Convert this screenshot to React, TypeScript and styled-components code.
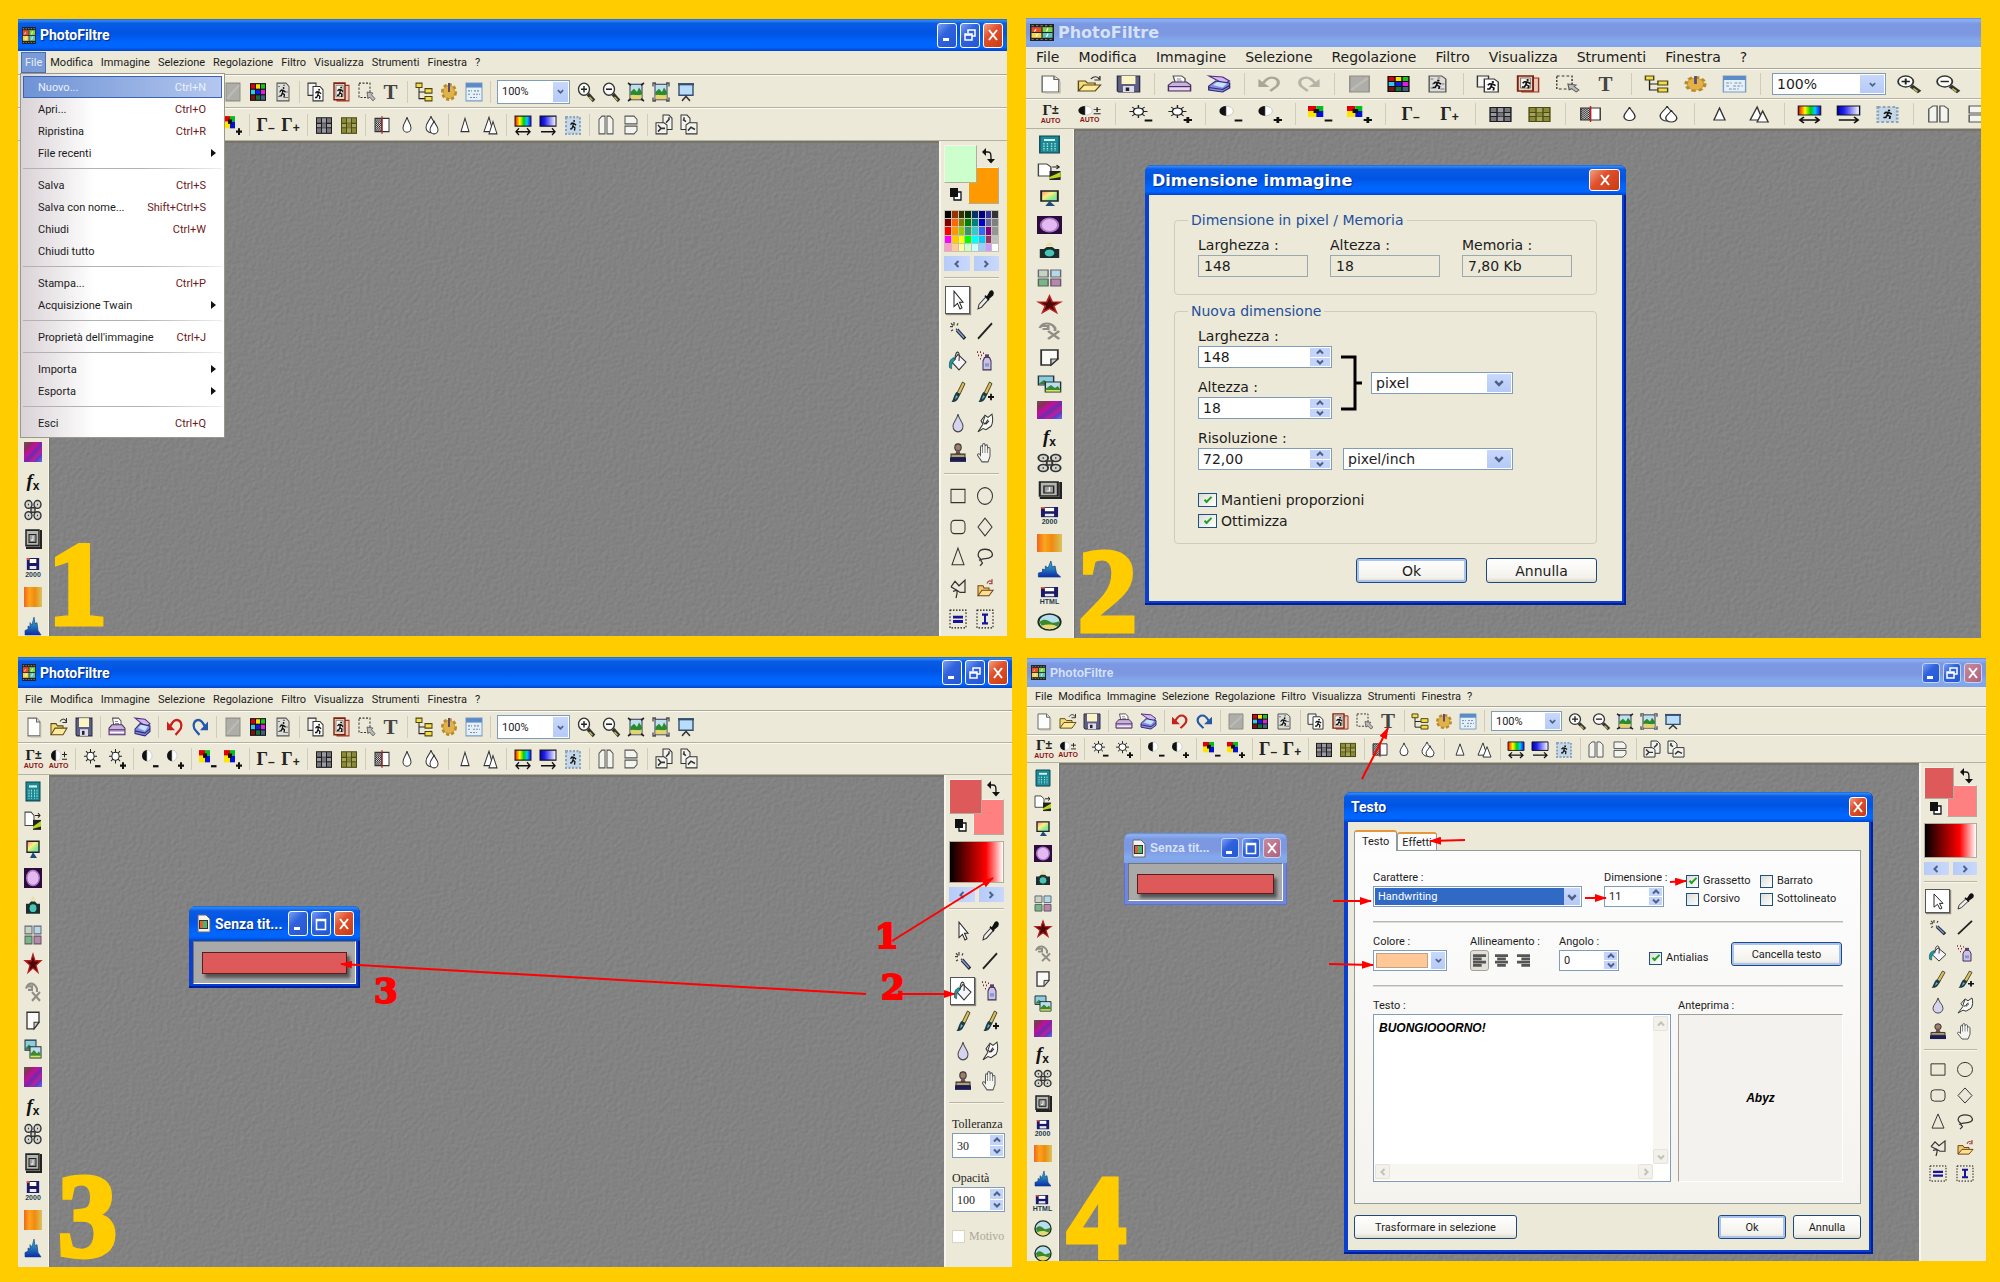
import React, { ReactNode, useState } from 'react';
import styled, { createGlobalStyle, css, ThemeProvider } from 'styled-components';

/* ---------- per-window metrics ---------- */

interface Metrics {
  font: string;
  textSize: number;
  menuSize: number;
  menuGap: number;
  menuLeft: number;
  titleFont: string;
  titleSize: number;
  titleHeight: number;
  menuHeight: number;
  barHeight: number;
  barLeft: number;
  slot: number;
  rule: number;
  iconW: number;
  iconH: number;
  zoomW: number;
  zoomH: number;
  zoomGap: number;
  railW: number;
  railTop: number;
  railRows: string;
  railCount: number;
  boxW: number;
  boxGap: number;
  inner: number;
  swatchRows: string;
  swatchCols: string;
  paletteH: number;
  arrowH: number;
  toolRows: string;
  toolH: number;
  captionW: number;
  captionH: number;
  logoW: number;
  logoH: number;
}

const narrow = 'Roboto, "Liberation Sans", Arial, sans-serif';
const wide = '"DejaVu Sans", Verdana, sans-serif';

const tall: Metrics = {
  font: narrow, textSize: 11, menuSize: 11, menuGap: 8, menuLeft: 7,
  titleFont: narrow, titleSize: 14, titleHeight: 32, menuHeight: 24, barHeight: 33,
  barLeft: 3, slot: 25, rule: 8, iconW: 18, iconH: 20, zoomW: 73, zoomH: 24, zoomGap: 3,
  railW: 31, railTop: 6, railRows: '29px', railCount: 17, boxW: 68, boxGap: 5, inner: 55,
  swatchRows: '22px 16px 21px', swatchCols: '24px 9px 22px', paletteH: 42, arrowH: 15,
  toolRows: '31px 31px 30px', toolH: 28, captionW: 20, captionH: 25, logoW: 14, logoH: 17,
};

const tallLow: Metrics = {
  ...tall, titleHeight: 31, menuHeight: 23, barHeight: 32, railTop: 3, railRows: '28px 29px',
  boxGap: 6, swatchRows: '20px 15px 21px', toolRows: '30px',
};

const broad: Metrics = {
  ...tall, font: wide, textSize: 14, menuSize: 14, menuGap: 19, menuLeft: 10,
  titleFont: wide, titleSize: 16, titleHeight: 29, menuHeight: 22, barHeight: 30,
  barLeft: 5, slot: 39, rule: 12, iconW: 25, iconH: 18, zoomW: 114, zoomH: 22, zoomGap: 6,
  railW: 48, railTop: 3, railRows: '26px 27px', railCount: 19, logoW: 24, logoH: 17,
};

const compact: Metrics = {
  ...tall, menuGap: 6, menuLeft: 8,
  titleFont: '"Liberation Sans", Arial, sans-serif',
  titleSize: 12, titleHeight: 29, menuHeight: 20, barHeight: 28, barLeft: 5, slot: 24, rule: 8,
  iconH: 17, zoomW: 71, zoomH: 20, railW: 32, railTop: 3, railRows: '25px', railCount: 20,
  boxW: 67, inner: 53, swatchRows: '18px 14px 18px', swatchCols: '23px 7px 23px', paletteH: 35,
  arrowH: 13, toolRows: '26px', toolH: 24, captionW: 18, captionH: 20, logoW: 15, logoH: 15,
};

type T = { theme: any };
const m = (key: keyof Metrics) => ({ theme }: T) => `${theme[key]}px`;

/* ---------- base ---------- */

const GlobalStyle = createGlobalStyle`
  *, *::before, *::after { box-sizing: border-box; }
  body { margin: 0; background: #ffcc00; }
  button, input, select, textarea { font: inherit; color: inherit; margin: 0; }
`;

const Page = styled.main`
  display: grid;
  grid-template-columns: 994fr 960fr;
  grid-template-rows: minmax(0, 620fr) minmax(0, 610fr);
  gap: 19px 14px;
  height: 100vh;
  padding: 18px 14px 15px 18px;
  background: #ffcc00;
`;

const Window = styled.section<{ $margin?: string }>`
  position: relative;
  display: flex;
  flex-direction: column;
  min-width: 0;
  overflow: hidden;
  margin: ${p => p.$margin || '0'};
  background: #ece9d8;
  color: #1c1c1c;
  font-family: ${({ theme }: T) => theme.font};
  font-size: ${m('textSize')};
`;

const blue = 'linear-gradient(#1a66d8 0, #2f86f4 5%, #0a5ce4 14%, #0054e3 45%, #0064fb 70%, #0066ff 88%, #0044c8 100%)';
const faded = 'linear-gradient(#5b87e0 0, #8fb2f2 6%, #7b98e2 20%, #7d97e0 55%, #84aaec 80%, #7fa3ea 100%)';

const TitleBar = styled.header<{ $idle?: boolean }>`
  display: flex;
  flex: none;
  align-items: center;
  gap: 4px;
  height: ${m('titleHeight')};
  padding: 0 4px;
  background: ${p => (p.$idle ? faded : blue)};
  color: ${p => (p.$idle ? '#d6e2fa' : '#fff')};
`;

const Title = styled.h2<{ $idle?: boolean }>`
  flex: 1;
  min-width: 0;
  margin: 0;
  font: bold ${m('titleSize')} ${({ theme }: T) => theme.titleFont};
  white-space: nowrap;
  text-shadow: ${p => (p.$idle ? 'none' : '1px 1px 1px #0a2a80')};
`;

const Caption = styled.div`
  display: flex;
  flex: none;
  gap: 3px;
`;

const CaptionButton = styled.button<{ $close?: boolean; $idle?: boolean }>`
  display: grid;
  place-items: center;
  width: ${m('captionW')};
  height: ${m('captionH')};
  padding: 0;
  border: 1px solid ${p => (p.$idle ? '#c3d2f5' : '#fff')};
  border-radius: 3px;
  background: ${p => p.$close
    ? (p.$idle ? 'linear-gradient(135deg, #c98a9c, #b0607c)' : 'linear-gradient(135deg, #f0a080, #e0502c 40%, #c83a14)')
    : 'linear-gradient(135deg, #7aa0f4, #2f62dc 40%, #2458d4)'};
`;

const MenuBar = styled.nav`
  display: flex;
  flex: none;
  align-items: center;
  gap: ${m('menuGap')};
  height: ${m('menuHeight')};
  padding-left: ${m('menuLeft')};
  border-bottom: 1px solid #a9a796;
  font-size: ${m('menuSize')};
`;

const MenuButton = styled.button<{ $open?: boolean }>`
  padding: 0;
  border: 0;
  background: none;
  line-height: 19px;
  white-space: nowrap;
  ${p => p.$open && css`
    margin: 0 -4px;
    padding: 0 3px;
    border: 1px solid #4a6ea9;
    background: #7a9bd8;
    color: #e6eefc;
  `}
`;

const Toolbar = styled.div`
  display: flex;
  flex: none;
  align-items: center;
  height: ${m('barHeight')};
  padding-left: ${m('barLeft')};
  overflow: hidden;
  border-top: 1px solid #fbfaf4;
  border-bottom: 1px solid #b4b19e;
`;

const Rule = styled.i`
  flex: none;
  width: ${m('rule')};
  height: 22px;
  background: linear-gradient(#cfccba, #cfccba) center / 1px 100% no-repeat;
`;

const Slot = styled.button`
  display: grid;
  flex: none;
  place-items: center;
  width: ${m('slot')};
  height: 100%;
  padding: 0;
  border: 0;
  background: none;
`;

const Body = styled.div`
  display: flex;
  flex: 1;
  min-height: 0;
`;

const Rail = styled.div`
  display: grid;
  flex: none;
  grid-auto-rows: ${({ theme }: T) => theme.railRows};
  align-content: start;
  width: ${m('railW')};
  padding-top: ${m('railTop')};
  overflow: hidden;
  border-right: 1px solid #f8f6ec;
`;

const RailButton = styled.button`
  display: grid;
  place-items: center;
  padding: 0;
  border: 0;
  background: none;
`;

const Canvas = styled.div`
  position: relative;
  flex: 1;
  min-width: 0;
  background: #828282;
  box-shadow: inset 1px 2px 0 #77756b;
`;

const Grain = styled.svg`
  position: absolute;
  inset: 2px 0 0 1px;
  width: calc(100% - 1px);
  height: calc(100% - 2px);
`;

const ToolBox = styled.aside`
  flex: none;
  width: ${m('boxW')};
  padding: 4px 0 0 3px;
  border-left: 2px solid #f8f6ec;
`;

const Swatches = styled.div`
  display: grid;
  grid-template-columns: ${({ theme }: T) => theme.swatchCols};
  grid-template-rows: ${({ theme }: T) => theme.swatchRows};
  place-items: center;
  width: ${m('inner')};
`;

const Swatch = styled.button<{ $color: string; $back?: boolean }>`
  z-index: ${p => (p.$back ? 0 : 1)};
  grid-area: ${p => (p.$back ? '2 / 2 / 4 / 4' : '1 / 1 / 3 / 3')};
  place-self: stretch;
  padding: 0;
  border: 1px solid;
  border-color: #f6f4ea #b0ad9a #b0ad9a #f6f4ea;
  background: ${p => p.$color};
`;

const SwatchTool = styled.button<{ $low?: boolean }>`
  grid-area: ${p => (p.$low ? '3 / 1' : '1 / 3')};
  display: grid;
  padding: 0;
  border: 0;
  background: none;
`;

const Palette = styled.div`
  display: grid;
  grid-template-columns: repeat(8, 1fr);
  grid-template-rows: repeat(5, 1fr);
  gap: 1px;
  width: ${m('inner')};
  height: ${m('paletteH')};
  margin-top: 6px;
  padding: 1px;
  background: #c5c2b4;
`;

const Cell = styled.button<{ $color: string }>`
  min-width: 0;
  padding: 0;
  border: 0;
  background: ${p => p.$color};
`;

const Spectrum = styled.div`
  width: ${m('inner')};
  height: ${m('paletteH')};
  margin-top: 6px;
  border: 1px solid #b0ad9a;
  background: linear-gradient(90deg, #000, #f00 68%, #fff);
`;

const Pager = styled.div`
  display: grid;
  grid-template-columns: 1fr 1fr;
  gap: 4px;
  width: ${m('inner')};
  margin: 4px 0 6px;
`;

const PagerButton = styled.button`
  display: grid;
  place-items: center;
  height: ${m('arrowH')};
  padding: 0;
  border: 0;
  background: linear-gradient(90deg, #b6cbf8, #c9d8fb);
`;

const Divider = styled.hr`
  width: ${m('inner')};
  height: 2px;
  margin: ${m('boxGap')} 0;
  border: 0;
  border-top: 1px solid #b9b6a4;
  border-bottom: 1px solid #f8f6ec;
`;

const Tools = styled.div`
  display: grid;
  grid-template-columns: repeat(2, 27px);
  grid-auto-rows: ${({ theme }: T) => theme.toolRows};
  place-items: center;
`;

const ToolButton = styled.button<{ $on?: boolean }>`
  display: grid;
  place-items: center;
  width: 25px;
  height: ${m('toolH')};
  padding: 0;
  border: 1px solid ${p => (p.$on ? '#555' : 'transparent')};
  background: ${p => (p.$on ? '#fff' : 'none')};
  box-shadow: ${p => (p.$on ? '1px 1px 1px #8a887c' : 'none')};
`;

/* ---------- form parts ---------- */

const Field = styled.label`
  display: flex;
  flex-direction: column;
  white-space: nowrap;
`;

const boxed = css`
  border: 1px solid #7f9db9;
  background: #fff;
`;

const ReadOnly = styled.input`
  width: 110px;
  height: 22px;
  padding: 0 5px;
  border: 1px solid #9aa8b0;
  background: #ece9d8;
`;

const SpinShell = styled.span<{ $w: number; $h: number }>`
  display: flex;
  width: ${p => p.$w}px;
  height: ${p => p.$h}px;
  padding: 1px;
  ${boxed}
`;

const SpinInput = styled.input`
  flex: 1;
  min-width: 0;
  padding: 0 0 0 3px;
  border: 0;
  outline: 0;
  background: none;
`;

const SpinKeys = styled.span<{ $w: number }>`
  display: grid;
  grid-template-rows: 1fr 1fr;
  gap: 1px;
  width: ${p => p.$w}px;
`;

const SpinKey = styled.button`
  display: grid;
  place-items: center;
  min-height: 0;
  padding: 0;
  border: 0;
  background: #c3d3fa;
`;

const SelectShell = styled.span<{ $w: number; $h: number; $key: number }>`
  display: grid;
  flex: none;
  grid-template-columns: minmax(0, 1fr) ${p => p.$key}px;
  width: ${p => p.$w}px;
  height: ${p => p.$h}px;
  padding: 1px;
  ${boxed}
`;

const Select = styled.select<{ $mark?: boolean }>`
  grid-area: 1 / 1 / 2 / 3;
  width: 100%;
  min-width: 0;
  padding: 0 3px;
  border: 0;
  outline: 0;
  appearance: none;
  background: ${p => (p.$mark ? '#316ac5' : 'none')};
  color: ${p => (p.$mark ? '#fff' : 'inherit')};
`;

const SelectKey = styled.span`
  z-index: 1;
  grid-area: 1 / 2;
  display: grid;
  place-items: center;
  background: linear-gradient(#c9d8fc, #b5caf7);
  pointer-events: none;
`;

const ColorChip = styled.button`
  grid-area: 1 / 1;
  margin: 1px 3px 1px 1px;
  padding: 0;
  border: 1px solid #b5a58e;
  background: #ffc896;
`;

const CheckLabel = styled.label<{ $off?: boolean }>`
  display: flex;
  align-items: center;
  gap: 4px;
  color: ${p => (p.$off ? '#aca899' : 'inherit')};
  line-height: 14px;
  white-space: nowrap;
`;

const Check = styled.input<{ $w?: number; $h?: number }>`
  appearance: none;
  display: grid;
  flex: none;
  place-items: center;
  width: ${p => p.$w || 13}px;
  height: ${p => p.$h || 13}px;
  border: 1px solid #1c5180;
  background: linear-gradient(135deg, #dcdcd7, #fff);
  &:disabled { border-color: #d8d5c6; background: #fff; }
  &:checked::before {
    content: '';
    width: 8px;
    height: 4px;
    margin-top: -3px;
    border: solid #21a121;
    border-width: 0 0 2px 2px;
    transform: rotate(-45deg);
  }
`;

const PushButton = styled.button<{ $w: number; $h: number; $main?: boolean }>`
  width: ${p => p.$w}px;
  height: ${p => p.$h}px;
  padding: 0;
  border: 1px solid #1f4a7c;
  border-radius: 3px;
  background: linear-gradient(#fff, #f3f2ec 80%, #dcd8cb);
  box-shadow: ${p => (p.$main ? 'inset 0 0 0 2px #a9c4f2' : 'none')};
`;

/* ---------- floating windows ---------- */

const Floating = styled.section<{ $x: number; $y: number; $w: number; $h: number; $idle?: boolean }>`
  position: absolute;
  left: ${p => p.$x}px;
  top: ${p => p.$y}px;
  display: flex;
  flex-direction: column;
  width: ${p => p.$w}px;
  height: ${p => p.$h}px;
  padding: 0 4px 4px;
  overflow: hidden;
  border-radius: 7px 7px 0 0;
  background: ${p => (p.$idle ? '#7088dc' : '#0a3fd0')};
  box-shadow: ${p => (p.$idle ? 'inset 0 0 0 1px #5b72d0' : 'inset -2px -2px 0 #001f9c')};
`;

const FloatTitle = styled(TitleBar)<{ $h: number }>`
  height: ${p => p.$h}px;
  margin: 0 -4px;
  padding: 0 6px 0 7px;
`;

const DocBody = styled.div`
  flex: 1;
  padding: 10px 8px 0 8px;
  border: 1px solid;
  border-color: #77756b #fff #fff #77756b;
  background: #a9a9a9;
`;

const DocImage = styled.div<{ $h: number }>`
  height: ${p => p.$h}px;
  border: 1px solid #5a1c1c;
  background: #de5a5a;
  box-shadow: 3px 4px 3px #555;
`;

const DialogBody = styled.div<{ $pad: string }>`
  flex: 1;
  padding: ${p => p.$pad};
  background: #ece9d8;
`;

const Group = styled.fieldset<{ $gap?: number }>`
  margin: 0 0 ${p => p.$gap || 0}px;
  padding: 7px 23px 0 23px;
  border: 1px solid #d0ccbb;
  border-radius: 4px;
  legend {
    padding: 0 3px;
    margin-left: -10px;
    color: #24509c;
    line-height: 16px;
  }
`;

const Row = styled.div<{ $gap?: number; $top?: number; $align?: string; $justify?: string }>`
  display: flex;
  align-items: ${p => p.$align || 'flex-start'};
  justify-content: ${p => p.$justify || 'flex-start'};
  gap: ${p => p.$gap || 0}px;
  margin-top: ${p => p.$top || 0}px;
`;

const Column = styled.div<{ $gap?: number; $top?: number }>`
  display: flex;
  flex-direction: column;
  gap: ${p => p.$gap || 0}px;
  margin-top: ${p => p.$top || 0}px;
`;

const Line = styled.span<{ $h: number }>`
  line-height: ${p => p.$h}px;
`;

const Bracket = styled.svg`
  flex: none;
  width: 21px;
  height: 56px;
`;

const TabRow = styled.div`
  display: flex;
  align-items: flex-end;
  height: 20px;
`;

const Tab = styled.button<{ $on?: boolean }>`
  z-index: 1;
  height: ${p => (p.$on ? 21 : 18)}px;
  margin-bottom: ${p => (p.$on ? -1 : 0)}px;
  padding: 0 ${p => (p.$on ? 7 : 4)}px;
  border: 1px solid #919b9c;
  border-top: 2px solid #e5973a;
  border-bottom: 0;
  border-radius: 3px 3px 0 0;
  background: #fcfcfe;
`;

const TabPanel = styled.div`
  display: flex;
  flex-direction: column;
  height: 354px;
  padding: 18px 17px 19px 18px;
  border: 1px solid #919b9c;
  background: linear-gradient(#fdfdfe, #f4f3ee);
`;

const FormGrid = styled.div<{ $cols: string }>`
  display: grid;
  grid-template-columns: ${p => p.$cols};
  align-items: start;
`;

const PanelRule = styled.hr`
  width: 100%;
  height: 2px;
  margin: 14px 0 10px;
  border: 0;
  border-top: 1px solid #b9b8b0;
  border-bottom: 1px solid #dedcd4;
`;

const AlignButton = styled.button<{ $on?: boolean }>`
  display: grid;
  place-items: center;
  width: 19px;
  height: 21px;
  padding: 0;
  border: 1px solid ${p => (p.$on ? '#a5a398' : 'transparent')};
  border-radius: 3px;
  background: ${p => (p.$on ? '#e2e0d8' : 'none')};
`;

const TextShell = styled.span`
  display: grid;
  grid-template-columns: minmax(0, 1fr) 16px;
  grid-template-rows: minmax(0, 1fr) 16px;
  height: 168px;
  padding: 1px;
  ${boxed}
`;

const handwriting = css`
  color: #000;
  font: italic bold 12px/16px "Liberation Sans", Arial, sans-serif;
`;

const TextArea = styled.textarea`
  padding: 4px;
  border: 0;
  outline: 0;
  resize: none;
  background: none;
  ${handwriting}
`;

const ScrollBar = styled.span<{ $row?: boolean }>`
  display: flex;
  flex-direction: ${p => (p.$row ? 'row' : 'column')};
  justify-content: space-between;
  background: #f7f6f1;
`;

const ScrollKey = styled.span`
  display: grid;
  place-items: center;
  width: 15px;
  height: 15px;
  border: 1px solid #e6e4da;
  border-radius: 2px;
  background: #f2f1eb;
`;

const Preview = styled.output`
  display: grid;
  place-items: center;
  height: 168px;
  border: 1px solid;
  border-color: #a3a195 #fff #fff #a3a195;
  background: #f3f2ee;
  ${handwriting}
`;

const Spacer = styled.span`
  flex: 1;
`;

/* ---------- drop-down menu ---------- */

const DropMenu = styled.ul`
  position: absolute;
  left: 2px;
  top: 54px;
  z-index: 1;
  width: 205px;
  margin: 0;
  padding: 2px 2px 3px;
  list-style: none;
  border: 1px solid #9a9888;
  background: linear-gradient(90deg, #d9d2d6, #fff 36%);
`;

const DropItem = styled.li`
  height: 22px;
`;

const DropButton = styled.button<{ $on?: boolean }>`
  display: flex;
  align-items: center;
  width: 100%;
  height: 22px;
  padding: 0 5px 0 14px;
  border: 1px solid ${p => (p.$on ? '#3d63ad' : 'transparent')};
  background: ${p => (p.$on ? 'linear-gradient(90deg, #6f93d6, #b4c7ee)' : 'none')};
  color: ${p => (p.$on ? '#eaf1ff' : '#1c1c1c')};
  text-align: left;
  white-space: nowrap;
`;

const DropText = styled.span`
  flex: 1;
`;

const Shortcut = styled.kbd<{ $on?: boolean }>`
  padding-right: 10px;
  color: ${p => (p.$on ? '#eaf1ff' : '#701818')};
  font: inherit;
`;

const DropRule = styled.li`
  height: 10px;
  padding-top: 4px;
  &::before { content: ''; display: block; height: 1px; background: linear-gradient(90deg, #b5b0b2 60%, #eee); }
`;

/* ---------- annotations ---------- */

const Overlay = styled.svg`
  position: absolute;
  inset: 0;
  z-index: 3;
  width: 100%;
  height: 100%;
  pointer-events: none;
`;

const StepNumber = styled.strong<{ $x: number; $y: number }>`
  position: absolute;
  left: ${p => p.$x}px;
  top: ${p => p.$y}px;
  z-index: 2;
  color: #ffcc00;
  font: bold 118px/82px "Liberation Serif", "Times New Roman", serif;
  -webkit-text-stroke: 5px #ffcc00;
`;

const Callout = styled.b<{ $x: number; $y: number }>`
  position: absolute;
  left: ${p => p.$x}px;
  top: ${p => p.$y}px;
  z-index: 2;
  color: #f00;
  font: bold 34px/26px "DejaVu Serif", serif;
  -webkit-text-stroke: 2px #f00;
`;

/* ---------- icons ---------- */

const IconSvg = styled.svg`
  display: block;
  width: ${m('iconW')};
  height: ${m('iconH')};
  overflow: visible;
`;

const Stack = styled.span`
  display: flex;
  flex-direction: column;
  align-items: center;
  svg { height: calc(${m('iconH')} - 7px); }
`;

const Tiny = styled.small<{ $color: string }>`
  color: ${p => p.$color};
  font: bold 7px/7px "Liberation Sans", Arial, sans-serif;
`;

const Greek = styled.span`
  display: flex;
  align-items: flex-start;
  color: #222;
  font: bold 18px/18px "Liberation Serif", serif;
  sup, sub { font: bold 12px/12px "Liberation Sans", sans-serif; }
  sub { align-self: flex-end; }
`;

const GreekAuto = styled(Greek)`
  font-size: 15px;
  line-height: 13px;
`;

const Letter = styled.span`
  color: #444;
  font: bold 21px/22px "Liberation Serif", serif;
`;

const Script = styled.span`
  color: #111;
  font: italic bold 19px/20px "Liberation Serif", serif;
  sub { font: bold 12px/10px "Liberation Sans", sans-serif; vertical-align: -3px; }
`;

const runner = (x: number, y: number) => (
  <g transform={`translate(${x} ${y})`} stroke="#111" strokeWidth="1.3" fill="none">
    <circle cx="4.6" cy="1" r=".9" fill="#111" stroke="none" />
    <path d="M4 2.5 3.4 5.5 5.4 7 5 9.5M3.4 5.5 2.2 8H.5M1 4.2 2.4 2.8 4.4 3 6.6 4.6" />
  </g>
);
const minus = <path d="M12 15.5h5.5" stroke="#111" strokeWidth="2" />;
const plus = <path d="M12 15h6M15 12v6" stroke="#111" strokeWidth="2" />;
const sun = (
  <g stroke="#222" fill="#fff">
    <path d="M7.5 0v13M1 6.5h13M3 2l9 9M12 2l-9 9" />
    <circle cx="7.5" cy="6.5" r="3.6" />
  </g>
);
const half = <g><path d="M6 1a5 5 0 0 0 0 10z" fill="#111" /><path d="M6 1a5 5 0 0 1 0 10z" fill="#fff" stroke="#bbb" strokeWidth=".6" /></g>;
const cube = <g><path d="M0 1h6v5H0z" fill="#e00000" /><path d="M6 1h5v5H6z" fill="#00c020" /><path d="M0 6h6v6H0z" fill="#ffe600" /><path d="M6 6h5v6H6z" fill="#0010d8" /><path d="M4 4h4v4H4z" fill="#111" /></g>;
const mesh = (a: string, b: string, c: string) => (
  <g>
    <path d="M1 2h16v15H1z" fill={a} />
    <path d="M2 3h4v4H2zM12 3h4v4h-4zM2 12h4v4H2zM12 12h4v4h-4zM7 7.500h4v4H7z" fill={b} />
    <path d="M7 3h4v4H7zM2 8h4v3H2zM12 8h4v3h-4zM7 12h4v4H7z" fill={c} />
  </g>
);
const lens = (
  <g>
    <path d="m11 11 6 6" stroke="#333" strokeWidth="3.500" />
    <path d="m12.500 13.500 3 3" stroke="#c9c24a" strokeWidth="1.200" />
    <circle cx="7" cy="6.500" r="5.500" fill="#fafaf6" stroke="#333" strokeWidth="1.300" />
  </g>
);
const photo = (
  <g>
    <path d="M3 2h12v14H3z" fill="#bfe0ee" stroke="#335" />
    <path d="M3.500 9 7 6l3 3 2-4 3 4v3H3.500z" fill="#2c8a2c" />
    <path d="M3.500 12c4-2 8 2 11-1v4.500h-11z" fill="#e6d36a" />
  </g>
);
const floppy = (
  <g>
    <path d="M3 0h13v12H3z" fill="#1a1a66" />
    <path d="M6 1h7v4H6z" fill="#fff" />
    <path d="M3 0h3v2H3z" fill="#e05030" />
    <path d="M6 8h7v3H6z" fill="#e8e8f4" />
  </g>
);
const globe = (
  <g>
    <circle cx="9" cy="9" r="8" fill="#b7ddf0" stroke="#1c2c1c" strokeWidth="1.400" />
    <path d="M1.800 9c3-4 6-2 8 0s5-1 6.400-.5c0 3-1 4-2 5-4-2-7 0-11-1z" fill="#3a8a2c" />
    <path d="M3 13c4-2 8-2 11.500.5-3 3.500-8 4-11.500-.5z" fill="#e8d870" />
  </g>
);
const bucket = (
  <g>
    <path d="m9 3 8 7-7 7-7-7z" fill="#f4f4fa" stroke="#333" />
    <path d="M6 8C6 2 8 0 9.500 1.500S10 7 10 9" fill="none" stroke="#333" />
    <path d="M5 6C1 7 0 10 .5 15l2 1C2.500 12 3 10 6 8z" fill="#1c9a9a" stroke="#145" strokeWidth=".6" />
  </g>
);
const brush = (
  <g>
    <path d="M8 10 13.500 0l2.500 1.500L11 11z" fill="#d9c063" stroke="#332a10" strokeWidth=".8" />
    <path d="m7.500 9 4 2-3 5c-1.500 2-4 2-6 2 2-2 2-6 5-9z" fill="#1c3c44" />
    <path d="m7 12 2 1-3 3z" fill="#7fb0c0" />
  </g>
);
const hook = (flip: boolean, color: string) => (
  <g transform={flip ? 'translate(18 0) scale(-1 1)' : undefined}>
    <path d="M4.500 8C7 3 10 2 12.500 3c4 2 3.500 7 .5 9.500L9.500 16" fill="none" stroke={color} strokeWidth="2.200" />
    <path d="M1 4v8h8z" fill={color} />
  </g>
);

const art: Record<string, ReactNode> = {
  new: <g><path d="M3 1h8.500L15 4.500V17H3z" fill="#fdfdfb" stroke="#666" /><path d="M11.500 1v3.500H15" fill="#ddd" stroke="#666" /><path d="M15.800 6v12H5" fill="none" stroke="#bbb8aa" /></g>,
  open: <g><path d="M1 16V6h5l1.500 2H13v3" fill="#f4dd7a" stroke="#5c4a14" /><path d="m1 16 4-6h12l-4 6z" fill="#ffe99a" stroke="#5c4a14" /><path d="M10 4c2-3 5-3 6 0m.5-3v4h-4" fill="none" stroke="#333" /></g>,
  save: <g><path d="M1 1h16v16H2l-1-1z" fill="#5f5f84" stroke="#2c2c44" /><path d="M4 1h10v8H4z" fill="#fbf4c4" /><path d="M5 11h8v6H5z" fill="#dcdcec" /><path d="M7 12.500h2.500V16H7z" fill="#222" /></g>,
  print: <g><path d="M6 8 4.500 1h6L13 3.500V8" fill="#fff" stroke="#555" /><path d="M7 4h3M7 6h4" stroke="#888" /><path d="M1 10 4 7h10l3 3v6H1z" fill="#c9b2dc" stroke="#4c3064" /><path d="M1 11.500h16" stroke="#4c3064" /><path d="M2 14h14" stroke="#fff" /></g>,
  scan: <g><path d="m2 1 10 1 5 4-4 3z" fill="#d7b8ec" stroke="#4c3084" /><path d="m2 11 5-5 10 2v5l-5 4-10-2z" fill="#8a8ae4" stroke="#2c2c74" /><path d="m5 10 3-3 7 1.500-3 4z" fill="#c4e4fa" /><path d="m2 12.500 10 2 5-4" fill="none" stroke="#2c2c74" /></g>,
  undo: hook(false, '#c8201c'),
  redo: hook(true, '#2458a8'),
  undoOff: hook(false, '#a9a798'),
  redoOff: hook(true, '#b6b4a6'),
  blank: <g><path d="M2 1h14v16H2z" fill="#aeada8" stroke="#8e8d86" /><path d="m3 15 12-12" stroke="#bcbbb6" strokeWidth="2" /></g>,
  palette: <g><path d="M1 1h16v16H1z" fill="#111" /><path d="M2 2h4v4H2z" fill="#e00000" /><path d="M7 2h4v4H7z" fill="#f4e400" /><path d="M12 2h4v4h-4z" fill="#20c020" /><path d="M2 7h4v4H2z" fill="#30c8f0" /><path d="M7 7h4v4H7z" fill="#1818e0" /><path d="M12 7h4v4h-4z" fill="#e020e0" /><path d="M2 12h4v4H2z" fill="#801010" /><path d="M7 12h4v4H7z" fill="#107040" /><path d="M12 12h4v4h-4z" fill="#406080" /></g>,
  thumb: <g><path d="M3 1h9l3 3v13H3z" fill="#dcdcd8" stroke="#555" /><path d="M4 4h2M9 3h2M4 13h2M11 14h3M5 9h1M12 9h2" stroke="#777" />{runner(5, 4.5)}</g>,
  copies: <g><path d="M1 1h8v11H1z" fill="#f4f4f0" stroke="#333" /><path d="M6 4h7l3 3v10H6z" fill="#fff" stroke="#333" />{runner(7.5, 6)}</g>,
  framed: <g><path d="M5 3h12v14H5z" fill="#e8c8b8" stroke="#a03020" /><path d="M2 1h11v15H2z" fill="#e4d4c4" stroke="#802010" strokeWidth="1.400" /><path d="M4 3h7v10H4z" fill="#f7f4ee" stroke="#555" strokeWidth=".6" />{runner(4.500, 4)}</g>,
  marquee: <g><path d="M2 1h11v13H2z" fill="none" stroke="#333" strokeDasharray="2 1.500" /><path d="m10 9 6 1-1.500 1.500L18 15l-2 2-3.500-3.500L11 15z" fill="#bbb" stroke="#555" strokeWidth=".8" /></g>,
  tree: <g><path d="M4 4v11h6M4 9h6" fill="none" stroke="#222" /><path d="M1 1h6v4H1zM10 6h7v4h-7zM10 13h7v4h-7z" fill="#f4dc4a" stroke="#4c4410" /></g>,
  gear: <g><circle cx="9" cy="9" r="6.500" fill="#d6a634" stroke="#b98a2c" strokeWidth="3" strokeDasharray="3 2" /><circle cx="9" cy="9" r="5.500" fill="#e0b248" /><path d="M9 1v8" stroke="#5c4a7a" strokeWidth="2" /></g>,
  form: <g><path d="M1 1h16v16H1z" fill="#e4f0fa" stroke="#7c9cc4" /><path d="M1 1h16v4H1z" fill="#5c8cc8" /><path d="M3 8h4M9 8h6M3 11h3M8 11h7M5 14h7" stroke="#7c8ca4" strokeDasharray="2 1" /></g>,
  zoomIn: <g>{lens}<path d="M4 6.500h6M7 3.500v6" stroke="#222" strokeWidth="1.400" /></g>,
  zoomOut: <g>{lens}<path d="M4 6.500h6" stroke="#222" strokeWidth="1.400" /></g>,
  fit: <g>{photo}<path d="m1 1 3 2M17 1l-3 2M1 17l3-2M17 17l-3-2" stroke="#222" strokeWidth="1.600" /></g>,
  real: <g>{photo}<path d="M1 4V1h3M14 1h3v3M1 14v3h3M14 17h3v-3" fill="none" stroke="#555" strokeWidth="1.400" /></g>,
  present: <g><path d="M2 2h14v10H2z" fill="#b8dcfa" stroke="#34506c" strokeWidth="1.400" /><path d="M1 2h16" stroke="#34506c" strokeWidth="2" /><path d="M9 12v2m-4 3 4-4 4 4" fill="none" stroke="#333" strokeWidth="1.400" /></g>,
  lightDown: <g>{sun}{minus}</g>,
  lightUp: <g>{sun}{plus}</g>,
  contrastDown: <g>{half}{minus}</g>,
  contrastUp: <g>{half}{plus}</g>,
  colorDown: <g>{cube}{minus}</g>,
  colorUp: <g>{cube}{plus}</g>,
  meshGray: mesh('#1c1c1c', '#77777c', '#9a9aa4'),
  meshOlive: mesh('#4c4c14', '#8a8a3a', '#a4a45c'),
  mirror: <g><path d="M2 3h7v12H2z" fill="url(#dots)" stroke="#333" /><path d="M9 3h7v12H9z" fill="#fff" stroke="#333" /><path d="M9 1v16" stroke="#c01c1c" /></g>,
  drop: <path d="M9 2c1 4 4 6 4 9.500a4 4 0 0 1-8 0C5 8 8 6 9 2z" fill="#fff" stroke="#333" />,
  drops: <g fill="#fff" stroke="#333"><path d="M8 1c1 4 5 6 5 10a5 5 0 0 1-10 0c0-4 4-6 5-10z" /><path d="M11 5c1 4 4 5 4 8a4 4 0 0 1-8 0c0-3 3-4 4-8z" /></g>,
  peak: <path d="m9 3 4 12H5z" fill="#fff" stroke="#333" />,
  peaks: <g fill="#fff" stroke="#333"><path d="m8 2 4 13H3z" /><path d="m12 6 4 11H8z" /></g>,
  rainbow: <g><path d="M1 1h16v9H1z" fill="url(#rainbow)" stroke="#222" /><path d="M2 15h14M5 12l-3 3 3 3M13 12l3 3-3 3" fill="none" stroke="#111" strokeWidth="1.300" /></g>,
  ramp: <g><path d="M1 1h16v9H1z" fill="url(#ramp)" stroke="#112" /><path d="M2 15h14M13 12l3 3-3 3" fill="none" stroke="#111" strokeWidth="1.300" /></g>,
  stamp: <g><path d="M2 2h14v15H2z" fill="#c4d8e8" stroke="#8ca4bc" strokeWidth="2" strokeDasharray="2 1.500" />{runner(5.500, 4.500)}</g>,
  flipH: <g fill="#f4f4ee" stroke="#555"><path d="M2 4 5 1h3v16H2zM10 1h3l3 3v13h-6z" /></g>,
  flipV: <g fill="#f4f4ee" stroke="#555"><path d="M3 1h9l3 3v4H3zM3 10h12v4l-3 3H3z" /></g>,
  turnL: <g fill="#f4f4ee" stroke="#333"><path d="M8 0h6l3 3v10H8z" /><path d="M1 7h8l3 2v8H1z" /><path d="m3 9 3 3h4M6 12l-3 3M11 7l3-3v-2" fill="none" strokeWidth="1.500" /></g>,
  turnR: <g fill="#f4f4ee" stroke="#333"><path d="M1 0h6l3 3v10H1z" /><path d="M6 9l3-2h8v10H6z" /><path d="m8 14 3-3 4 2M3 4l3 2M4 2v3" fill="none" strokeWidth="1.500" /></g>,
  calc: <g><path d="M2 0h14v17H2z" fill="#1c8a94" stroke="#0c4450" /><path d="M5 3h8v2H5z" fill="#d4f0f0" /><path d="M5 7v8M7.500 7v8M10.500 7v8M13 7v8" stroke="#a4dce0" strokeDasharray="1.500 1" /></g>,
  export: <g><path d="M1 1h6l3 3v9H1z" fill="#fff" stroke="#444" /><path d="M9 8h8v9H9z" fill="#222" /><path d="m9 14 8-5v5l-8 2z" fill="#b8d820" /><path d="M11 4h5m-2-2 2 2-2 2" fill="none" stroke="#222" /></g>,
  screen: <g><path d="M3 2h12v10H3z" fill="url(#tint)" stroke="#222" strokeWidth="1.400" /><path d="m9 12 4 5H6z" fill="#1c4a7a" /></g>,
  halo: <g><path d="M0 0h18v18H0z" fill="#2c0c3c" /><ellipse cx="9" cy="9" rx="7" ry="7.500" fill="#a878c0" /><ellipse cx="9" cy="9" rx="5.500" ry="6" fill="#e4b8f0" /></g>,
  camera: <g><path d="M2 7h3l2-2h4l2 2h3v9H2z" fill="#222c2c" /><circle cx="9" cy="11" r="4" fill="#4cc4b4" stroke="#0c3434" /><path d="M6 4 9 0l3 4" fill="#ecd86a" opacity=".5" /></g>,
  tiles: <g><path d="M1 1h7v7H1z" fill="#c4d4c0" stroke="#667" /><path d="M10 1h7v7h-7z" fill="#b4d8e4" stroke="#667" /><path d="M1 10h7v7H1z" fill="#7ab48a" stroke="#565" /><path d="M10 10h7v7h-7z" fill="#b48aac" stroke="#656" /></g>,
  star: <path d="m9 1 2 6h6l-5 4 2 6.500L9 13.500l-5 4 2-6.500-5-4h6z" fill="#4c0808" stroke="#b82020" strokeWidth="1.200" />,
  off: <g fill="none" stroke="#8f8e86" strokeWidth="2"><path d="M2 6c2-6 8-6 11 0v3M3 4h5v3H4" /><path d="m8 9 8 8M16 9l-8 8" /></g>,
  note: <g><path d="M3 2h12v9l-5 6H3z" fill="#fafaf6" stroke="#333" strokeWidth="1.300" /><path d="M10 17v-6h5z" fill="#ccc" stroke="#333" /></g>,
  photos: <g><path d="M1 1h11v9H1z" fill="#8ccce0" stroke="#233" /><path d="m1 9 4-4 4 4z" fill="#3a7a3a" /><path d="M6 7h11v10H6z" fill="#bcdcf0" stroke="#233" /><path d="m6 14 4-4 3 3 2-2 2 4v2H6z" fill="#3a8a2c" /><path d="M6.500 15h10v1.500h-10z" fill="#e8d870" /></g>,
  silk: <path d="M0 0h18v18H0z" fill="url(#silk)" />,
  knot: <g fill="#d4d4d0" stroke="#333" strokeWidth="1.400"><circle cx="4.500" cy="4" r="3.500" /><circle cx="13.500" cy="4" r="3.500" /><circle cx="4.500" cy="14" r="3.500" /><circle cx="13.500" cy="14" r="3.500" /><path d="M7 7h4v4H7z" /><path d="M4 4h1M13 4h1M4 14h1M13 14h1" /></g>,
  bevel: <g><path d="M2 1h13v14H2z" fill="#b4b4b0" stroke="#222" strokeWidth="1.500" /><path d="M5 5h7v7H5z" fill="#9c9c98" stroke="#222" /><path d="M2 17h15V1" fill="none" stroke="#222" strokeWidth="2" /><path d="M9 6v4H7" fill="none" stroke="#eee" /></g>,
  amber: <path d="M0 0h18v18H0z" fill="url(#amber)" />,
  histogram: <path d="M1 17v-4l3-1V9l2 1V6l2 2 2-7 1 6 2-1 1 7 3 4z" fill="url(#hist)" stroke="#0c3c8c" strokeWidth=".6" />,
  globe,
  globe2: globe,
  pointer: <path d="M5 1v14l3.500-3 2.500 5 2-1-2.500-5H14z" fill="#fff" stroke="#222" />,
  dropper: <g><path d="m2 17 1-4 7-7 2.500 2.500-7 7z" fill="#eee" stroke="#333" /><path d="m9 5 4 4M11 7l3-5c2-2 4 0 2.500 2.500L12 8z" fill="#111" stroke="#111" strokeWidth="1.600" /></g>,
  wand: <g><path d="M5 1v3M1 5h3M2 2l2 2M9 2 8 4M2 9l2-1M7 7l1 1" stroke="#444" strokeWidth="1.200" /><path d="m8 8 8 8" stroke="#223" strokeWidth="3.400" /><path d="m8 8 7 7" stroke="#7a9ccc" strokeWidth="1.400" /></g>,
  line: <path d="M2 16 16 2" stroke="#222" strokeWidth="1.800" />,
  bucket,
  spray: <g><path d="M8 7c0-2 6-2 6 0l1 2v8H7V9z" fill="#cfc0e4" stroke="#3c2c54" /><path d="M9 3h4v3H9z" fill="#5c3c74" /><path d="M9 11h4v3H9z" fill="#7c9cd4" /><path d="M1 1h1M4 1h1M7 2h1M2 4h1M5 4h1M4 7h1" stroke="#802c3c" strokeWidth="1.500" /></g>,
  brush,
  brushPlus: <g>{brush}<path d="M12 13.500h6M15 10.500v6" stroke="#111" strokeWidth="1.800" /></g>,
  blur: <path d="M9 1c1 5 5 7 5 11a5 5 0 0 1-10 0c0-4 4-6 5-11z" fill="#d4d4f0" stroke="#444" />,
  smudge: <g><path d="m2 17 5-7-2-3 4-5 3 2 4-3c1 4 1 8-1 11l-5 3-3-1z" fill="#f8f8f4" stroke="#333" /><path d="M9 3 7 8l2 2 3-4M10 10l3-3" fill="none" stroke="#333" /></g>,
  clone: <g><circle cx="9" cy="4" r="3.200" fill="#9c7c74" stroke="#332" /><path d="M7.500 6h3l1 4h-5z" fill="#6c5450" /><path d="M2 10h14v3H2z" fill="#b49c7c" stroke="#332" /><path d="M1 13h16v4H1z" fill="#1c1c54" /></g>,
  hand: <g><path d="M6 17 1.500 11c0-2 2-1.500 3 0V4c0-2 2-2 2 0v-2c.5-2 2.500-2 2.500 0V3c.5-2 2.500-1.500 2.500 0v2c1-1.500 2.500-1 2.500.5V12l-2 5z" fill="#f4f4f0" stroke="#555" /><path d="M6.500 4v5M9 3v6M11.500 4v5" stroke="#777" strokeWidth=".8" /></g>,
  rect: <path d="M2 3h14v12H2z" fill="none" stroke="#333" />,
  circle: <circle cx="9" cy="9" r="7.500" fill="none" stroke="#333" />,
  round: <rect x="2" y="3" width="14" height="12" rx="3.500" fill="none" stroke="#333" />,
  diamond: <path d="m9 1 7 8-7 8-7-8z" fill="none" stroke="#333" />,
  triangle: <path d="m9 1 6 15H3z" fill="none" stroke="#333" />,
  lasso: <path d="M5 11C0 8 2 2 9 2s9 5 6 7-6 1-9 2c-3 2 2 3 0 4l-2 2m1-6-2 1" fill="none" stroke="#333" strokeWidth="1.200" />,
  poly: <path d="m2 8 4-5 4 4 6-5v11h-5l-3-2-6-3m6 3v3l-1 4m-3-6 4-1" fill="none" stroke="#333" strokeWidth="1.200" />,
  folder: <g><path d="M2 16V7h5l1 2h5v3" fill="#f4c870" stroke="#6c4410" /><path d="m2 16 4-5h11l-4 5z" fill="#ffdf94" stroke="#6c4410" /><path d="M11 5c1-3 4-3 5-1m0-3v4h-3" fill="none" stroke="#a04c4c" strokeWidth="1.200" /></g>,
  invert: <g><path d="M1 1h16v16H1z" fill="none" stroke="#111" strokeDasharray="1.500 1.500" /><path d="M4 6h10v2.500H4zM4 10h10v2.500H4z" fill="#14149c" /></g>,
  column: <g><path d="M1 1h16v16H1z" fill="none" stroke="#111" strokeDasharray="1.500 1.500" /><path d="M6 4h6v2h-2v6h2v2H6v-2h2V6H6z" fill="#14149c" /></g>,
};

const Icon = ({ name }: { name: string }) => {
  switch (name) {
    case 'text': return <Letter>T</Letter>;
    case 'fx': return <Script>f<sub>x</sub></Script>;
    case 'gammaDown': return <Greek>Γ<sub>–</sub></Greek>;
    case 'gammaUp': return <Greek>Γ<sub>+</sub></Greek>;
    case 'gammaAuto': return <Stack><GreekAuto>Γ<sup>±</sup></GreekAuto><Tiny $color="#8a1414">AUTO</Tiny></Stack>;
    case 'contrastAuto':
      return (
        <Stack>
          <IconSvg viewBox="0 0 18 12" preserveAspectRatio="none" aria-hidden>
            {half}<path d="M12 5h5M14.500 2.500v5M12 9.500h5" stroke="#222" />
          </IconSvg>
          <Tiny $color="#8a1414">AUTO</Tiny>
        </Stack>
      );
    case 'save2000':
    case 'saveHtml':
      return (
        <Stack>
          <IconSvg viewBox="0 0 19 13" preserveAspectRatio="none" aria-hidden>{floppy}</IconSvg>
          <Tiny $color="#1c3c4c">{name === 'saveHtml' ? 'HTML' : '2000'}</Tiny>
        </Stack>
      );
    default:
      return <IconSvg viewBox="0 0 18 18" preserveAspectRatio="none" aria-hidden>{art[name]}</IconSvg>;
  }
};

const Chevron = ({ turn = 0, size = 8, color = '#4d6185' }: { turn?: number; size?: number; color?: string }) => (
  <svg width={size} height={size} viewBox="0 0 8 8" aria-hidden>
    <path d="M1 2.500 4 5.500 7 2.500" transform={`rotate(${turn} 4 4)`} fill="none" stroke={color} strokeWidth="2" />
  </svg>
);

const LogoSvg = styled.svg`
  flex: none;
  width: ${m('logoW')};
  height: ${m('logoH')};
`;

const Logo = () => (
  <LogoSvg viewBox="0 0 16 16" preserveAspectRatio="none" aria-hidden>
    <path d="M0 0h16v16H0z" fill="#222" />
    <path d="M1 3h7v5H1z" fill="#e0502c" /><path d="M8 3h7v5H8z" fill="#7ad04c" />
    <path d="M1 8h7v5H1z" fill="#f4d44c" /><path d="M8 8h7v5H8z" fill="#5cc4b4" />
    <path d="M1 1.500h14M1 14.500h14" stroke="#777" strokeDasharray="1.500 1.500" />
    <path d="M8 3v10M1 8h14" stroke="#222" strokeWidth=".8" />
    <path d="M4 5 3 7M12 4l-1 3M5 9l-1 3M12 9l-1 3" stroke="#fff" strokeWidth=".8" fill="none" />
  </LogoSvg>
);

const DocLogo = () => (
  <svg width="15" height="19" viewBox="0 0 15 19" aria-hidden>
    <path d="M2 1h8l4 4v13H2z" fill="#f4f4ee" stroke="#667" />
    <path d="M3 6h9v9H3z" fill="#333" /><path d="M4 7h3v7H4z" fill="#e06030" /><path d="M7 7h4v7H7z" fill="#4cb46c" />
  </svg>
);

const Glyph = ({ kind }: { kind: 'min' | 'restore' | 'max' | 'close' }) => (
  <svg width="12" height="14" viewBox="0 0 12 14" fill="none" stroke="#fff" aria-hidden>
    {kind === 'min' && <path d="M2 11.500h6" strokeWidth="3" />}
    {kind === 'restore' && <g><path d="M4 5V2h7v6H8" strokeWidth="1.500" /><path d="M1 6h7v6H1zM1 7h7" strokeWidth="1.500" /></g>}
    {kind === 'max' && <path d="M1.500 2.500h9v10h-9zM1.500 3.500h9" strokeWidth="1.600" />}
    {kind === 'close' && <path d="m2 2 8 10M10 2 2 12" strokeWidth="2" />}
  </svg>
);

/* ---------- composed parts ---------- */

const Controls = ({ idle, doc }: { idle?: boolean; doc?: boolean }) => (
  <Caption>
    <CaptionButton $idle={idle} aria-label="Riduci a icona"><Glyph kind="min" /></CaptionButton>
    <CaptionButton $idle={idle} aria-label="Ripristina"><Glyph kind={doc ? 'max' : 'restore'} /></CaptionButton>
    <CaptionButton $idle={idle} $close aria-label="Chiudi"><Glyph kind="close" /></CaptionButton>
  </Caption>
);

const menus = ['File', 'Modifica', 'Immagine', 'Selezione', 'Regolazione', 'Filtro', 'Visualizza', 'Strumenti', 'Finestra', '?'];

const Menu = ({ open }: { open?: string }) => (
  <MenuBar>
    {menus.map(name => <MenuButton key={name} $open={name === open}>{name}</MenuButton>)}
  </MenuBar>
);

const Slots = ({ names }: { names: string[] }) => (
  <>{names.map(n => <Slot key={n} aria-label={n}><Icon name={n} /></Slot>)}</>
);

const ZoomShell = styled(SelectShell)`
  width: ${m('zoomW')};
  height: ${m('zoomH')};
  margin: 0 3px 0 ${m('zoomGap')};
`;

const MainBar = ({ off }: { off?: boolean }) => (
  <Toolbar>
    <Slots names={['new', 'open', 'save']} /><Rule />
    <Slots names={['print', 'scan']} /><Rule />
    <Slots names={off ? ['undoOff', 'redoOff'] : ['undo', 'redo']} /><Rule />
    <Slots names={['blank', 'palette', 'thumb']} /><Rule />
    <Slots names={['copies', 'framed', 'marquee', 'text']} /><Rule />
    <Slots names={['tree', 'gear', 'form']} /><Rule />
    <ZoomShell $w={0} $h={0} $key={off ? 24 : 15}>
      <Select aria-label="Zoom" defaultValue="100%"><option>100%</option></Select>
      <SelectKey><Chevron size={7} /></SelectKey>
    </ZoomShell>
    <Slots names={off ? ['zoomIn', 'zoomOut'] : ['zoomIn', 'zoomOut', 'fit', 'real', 'present']} />
  </Toolbar>
);

const effectGroups = [
  ['gammaAuto', 'contrastAuto'], ['lightDown', 'lightUp'], ['contrastDown', 'contrastUp'],
  ['colorDown', 'colorUp'], ['gammaDown', 'gammaUp'], ['meshGray', 'meshOlive'],
  ['mirror', 'drop', 'drops'], ['peak', 'peaks'], ['rainbow', 'ramp', 'stamp'],
  ['flipH', 'flipV'], ['turnL', 'turnR'],
];

const EffectBar = () => (
  <Toolbar>
    {effectGroups.map((g, i) => (
      <React.Fragment key={g[0]}>{i > 0 && <Rule />}<Slots names={g} /></React.Fragment>
    ))}
  </Toolbar>
);

const railNames = [
  'calc', 'export', 'screen', 'halo', 'camera', 'tiles', 'star', 'off', 'note', 'photos', 'silk',
  'fx', 'knot', 'bevel', 'save2000', 'amber', 'histogram', 'saveHtml', 'globe', 'globe2',
];

const SideRail = ({ count }: { count: number }) => (
  <Rail>{railNames.slice(0, count).map(n => <RailButton key={n} aria-label={n}><Icon name={n} /></RailButton>)}</Rail>
);

const Workspace = () => (
  <Canvas>
    <Grain aria-hidden><rect width="100%" height="100%" filter="url(#grain)" /></Grain>
  </Canvas>
);

const colors = `000000 993300 333300 003300 003366 000080 333399 333333
800000 ff6600 808000 008000 008080 0000cc 666699 808080
ff0000 ff9900 99cc00 339966 33cccc 3366ff 800080 969696
ff00ff ffcc00 ffff00 00ff00 00ffff 00ccff 993366 c0c0c0
ff99cc ffcc99 ffff99 ccffcc ccffff 99ccff cc99ff ffffff`.split(/\s+/);

const paintTools = ['pointer', 'dropper', 'wand', 'line', 'bucket', 'spray', 'brush', 'brushPlus', 'blur', 'smudge', 'clone', 'hand'];
const shapeTools = ['rect', 'circle', 'round', 'diamond', 'triangle', 'lasso', 'poly', 'folder', 'invert', 'column'];

interface BoxProps { front: string; back: string; spectrum?: boolean; selected: string; children?: ReactNode }

const Box = ({ front, back, spectrum, selected, children }: BoxProps) => (
  <ToolBox>
    <Swatches>
      <Swatch $color={front} aria-label="Colore in primo piano" />
      <Swatch $color={back} $back aria-label="Colore di sfondo" />
      <SwatchTool aria-label="Scambia i colori">
        <svg width="14" height="16" viewBox="0 0 14 16" aria-hidden>
          <path d="M3 4h4c3 0 3 2 3 8" fill="none" stroke="#111" strokeWidth="1.300" />
          <path d="M5 0v8L1 4zM6 11h8l-4 4.500z" fill="#111" />
        </svg>
      </SwatchTool>
      <SwatchTool $low aria-label="Colori predefiniti">
        <svg width="12" height="14" viewBox="0 0 12 14" aria-hidden>
          <path d="M4 5h7v8H4z" fill="#fff" stroke="#111" strokeWidth="1.300" /><path d="M0 1h8v9H0z" fill="#111" />
        </svg>
      </SwatchTool>
    </Swatches>
    {spectrum ? <Spectrum /> : (
      <Palette>{colors.map((c, i) => <Cell key={i} $color={`#${c}`} aria-label={`#${c}`} />)}</Palette>
    )}
    <Pager>
      <PagerButton aria-label="Precedente"><Chevron turn={90} /></PagerButton>
      <PagerButton aria-label="Successivo"><Chevron turn={-90} /></PagerButton>
    </Pager>
    <Divider />
    <Tools>
      {paintTools.map(n => <ToolButton key={n} $on={n === selected} aria-label={n}><Icon name={n} /></ToolButton>)}
    </Tools>
    <Divider />
    {children || (
      <Tools>{shapeTools.map(n => <ToolButton key={n} aria-label={n}><Icon name={n} /></ToolButton>)}</Tools>
    )}
  </ToolBox>
);

const Spinner = ({ value, w, h, k }: { value: string; w: number; h: number; k: number }) => {
  const [text, setText] = useState(value);
  return (
    <SpinShell $w={w} $h={h}>
      <SpinInput value={text} onChange={e => setText(e.target.value)} />
      <SpinKeys $w={k}>
        <SpinKey type="button" aria-label="Aumenta"><Chevron turn={180} size={8} /></SpinKey>
        <SpinKey type="button" aria-label="Diminuisci"><Chevron size={8} /></SpinKey>
      </SpinKeys>
    </SpinShell>
  );
};

const Choice = ({ value, w, h, k, mark, label }: { value: string; w: number; h: number; k: number; mark?: boolean; label?: string }) => (
  <SelectShell $w={w} $h={h} $key={k}>
    <Select $mark={mark} defaultValue={value} aria-label={label}><option>{value}</option></Select>
    <SelectKey><Chevron size={10} /></SelectKey>
  </SelectShell>
);

const Arrow = ({ x1, y1, x2, y2 }: { x1: number; y1: number; x2: number; y2: number }) => (
  <line x1={x1} y1={y1} x2={x2} y2={y2} stroke="#f00" strokeWidth="2" markerEnd="url(#tip)" />
);

const Defs = styled.svg`
  position: absolute;
  width: 0;
  height: 0;
`;

const SharedDefs = () => (
  <Defs aria-hidden>
    <defs>
      <filter id="grain" x="0" y="0" width="100%" height="100%" colorInterpolationFilters="sRGB">
        <feTurbulence type="fractalNoise" baseFrequency="0.26" numOctaves="2" seed="4" result="n" />
        <feDiffuseLighting in="n" surfaceScale="0.2" diffuseConstant="1" lightingColor="#9f9f9f">
          <feDistantLight azimuth="225" elevation="55" />
        </feDiffuseLighting>
      </filter>
      <marker id="tip" viewBox="0 0 12 8" refX="11" refY="4" markerWidth="12" markerHeight="8" markerUnits="userSpaceOnUse" orient="auto">
        <path d="M0 0 12 4 0 8z" fill="#f00" />
      </marker>
      <pattern id="dots" width="2" height="2" patternUnits="userSpaceOnUse">
        <path d="M0 0h2v2H0z" fill="#ddd" /><path d="M0 0h1v1H0zM1 1h1v1H1z" fill="#222" />
      </pattern>
      <linearGradient id="rainbow"><stop offset="0" stopColor="#f00" /><stop offset=".3" stopColor="#ff0" /><stop offset=".55" stopColor="#0c0" /><stop offset=".75" stopColor="#0cf" /><stop offset="1" stopColor="#20f" /></linearGradient>
      <linearGradient id="ramp"><stop offset="0" stopColor="#00a" /><stop offset=".3" stopColor="#22e" /><stop offset="1" stopColor="#fff" /></linearGradient>
      <linearGradient id="tint" x2="1" y2="1"><stop offset="0" stopColor="#f87" /><stop offset=".4" stopColor="#fe8" /><stop offset=".7" stopColor="#8e8" /><stop offset="1" stopColor="#8cf" /></linearGradient>
      <linearGradient id="silk" x2="1" y2="1"><stop offset="0" stopColor="#5a5c4c" /><stop offset=".2" stopColor="#8c2c5c" /><stop offset=".4" stopColor="#c010a0" /><stop offset=".55" stopColor="#6c2cac" /><stop offset=".7" stopColor="#c01c9c" /><stop offset=".8" stopColor="#5c3cc4" /><stop offset="1" stopColor="#6c6cec" /></linearGradient>
      <linearGradient id="amber"><stop offset="0" stopColor="#f4641c" /><stop offset=".3" stopColor="#fca41c" /><stop offset=".6" stopColor="#f08a10" /><stop offset="1" stopColor="#d8c45c" /></linearGradient>
      <linearGradient id="hist" x2="0" y2="1"><stop offset="0" stopColor="#3cc4c4" /><stop offset="1" stopColor="#0c2cac" /></linearGradient>
    </defs>
  </Defs>
);

/* ---------- the four steps ---------- */

const fileMenu: (null | [string, string])[] = [
  ['Nuovo...', 'Ctrl+N'], ['Apri...', 'Ctrl+O'], ['Ripristina', 'Ctrl+R'], ['File recenti', '>'], null,
  ['Salva', 'Ctrl+S'], ['Salva con nome...', 'Shift+Ctrl+S'], ['Chiudi', 'Ctrl+W'], ['Chiudi tutto', ''], null,
  ['Stampa...', 'Ctrl+P'], ['Acquisizione Twain', '>'], null,
  ["Proprietà dell'immagine", 'Ctrl+J'], null,
  ['Importa', '>'], ['Esporta', '>'], null,
  ['Esci', 'Ctrl+Q'],
];

const StepOne = () => (
  <ThemeProvider theme={tall}>
    <Window $margin="1px 5px 2px 0">
      <TitleBar><Logo /><Title>PhotoFiltre</Title><Controls /></TitleBar>
      <Menu open="File" />
      <MainBar />
      <EffectBar />
      <Body>
        <SideRail count={tall.railCount} />
        <Workspace />
        <Box front="#ccffcc" back="#ff9900" selected="pointer" />
      </Body>
      <DropMenu>
        {fileMenu.map((entry, i) => entry === null ? <DropRule key={i} /> : (
          <DropItem key={i}>
            <DropButton $on={i === 0}>
              <DropText>{entry[0]}</DropText>
              {entry[1] === '>'
                ? <svg width="5" height="8" aria-hidden><path d="M0 0 5 4 0 8z" fill="#111" /></svg>
                : <Shortcut $on={i === 0}>{entry[1]}</Shortcut>}
            </DropButton>
          </DropItem>
        ))}
      </DropMenu>
      <StepNumber $x={30} $y={525}>1</StepNumber>
    </Window>
  </ThemeProvider>
);

const StepTwo = () => (
  <ThemeProvider theme={broad}>
    <Window $margin="0 5px 0 0">
      <TitleBar $idle><Logo /><Title $idle>PhotoFiltre</Title></TitleBar>
      <Menu />
      <MainBar off />
      <EffectBar />
      <Body><SideRail count={broad.railCount} /><Workspace /></Body>
      <Floating $x={119} $y={147} $w={481} $h={440}>
        <FloatTitle $h={30}>
          <Title>Dimensione immagine</Title>
          <ThemeProvider theme={{ ...broad, captionW: 31, captionH: 22 }}>
            <CaptionButton $close aria-label="Chiudi"><Glyph kind="close" /></CaptionButton>
          </ThemeProvider>
        </FloatTitle>
        <DialogBody $pad="17px 25px 0 25px">
          <Group $gap={8}>
            <legend>Dimensione in pixel / Memoria</legend>
            <Row $gap={22}>
              <Field><Line $h={20}>Larghezza :</Line><ReadOnly readOnly value="148" /></Field>
              <Field><Line $h={20}>Altezza :</Line><ReadOnly readOnly value="18" /></Field>
              <Field><Line $h={20}>Memoria :</Line><ReadOnly readOnly value="7,80 Kb" /></Field>
            </Row>
            <Row $top={17} />
          </Group>
          <Group>
            <legend>Nuova dimensione</legend>
            <Row $gap={9} $align="center">
              <Column $gap={9}>
                <Field><Line $h={20}>Larghezza :</Line><Spinner value="148" w={134} h={22} k={20} /></Field>
                <Field><Line $h={20}>Altezza :</Line><Spinner value="18" w={134} h={22} k={20} /></Field>
              </Column>
              <Row $gap={9} $top={21} $align="center">
                <Bracket viewBox="0 0 21 56" aria-hidden><path d="M0 2h14v52H0M14 28h7" fill="none" stroke="#000" strokeWidth="3" /></Bracket>
                <Choice value="pixel" w={142} h={22} k={24} label="Unità" />
              </Row>
            </Row>
            <Row $gap={11} $top={9} $align="flex-end">
              <Field><Line $h={20}>Risoluzione :</Line><Spinner value="72,00" w={134} h={22} k={20} /></Field>
              <Choice value="pixel/inch" w={170} h={22} k={24} label="Unità di risoluzione" />
            </Row>
            <Column $gap={7} $top={23}>
              <CheckLabel><Check type="checkbox" defaultChecked $w={19} $h={14} />Mantieni proporzioni</CheckLabel>
              <CheckLabel><Check type="checkbox" defaultChecked $w={19} $h={14} />Ottimizza</CheckLabel>
            </Column>
            <Row $top={15} />
          </Group>
          <Row $gap={19} $top={14} $justify="flex-end">
            <PushButton $w={111} $h={25} $main>Ok</PushButton>
            <PushButton $w={111} $h={25}>Annulla</PushButton>
          </Row>
        </DialogBody>
      </Floating>
      <StepNumber $x={52} $y={533}>2</StepNumber>
    </Window>
  </ThemeProvider>
);

const Settings = styled.div`
  display: flex;
  flex-direction: column;
  gap: 11px;
  padding: 5px 0 0 3px;
  font: 12px/16px "Liberation Serif", "Times New Roman", serif;
`;

const StepThree = () => (
  <ThemeProvider theme={tallLow}>
    <Window>
      <TitleBar><Logo /><Title>PhotoFiltre</Title><Controls /></TitleBar>
      <Menu />
      <MainBar />
      <EffectBar />
      <Body>
        <SideRail count={tallLow.railCount} />
        <Workspace />
        <Box front="#de5a5a" back="#ff8080" spectrum selected="bucket">
          <Settings>
            <Field><Line $h={18}>Tolleranza</Line><Spinner value="30" w={53} h={25} k={13} /></Field>
            <Field><Line $h={18}>Opacità</Line><Spinner value="100" w={53} h={25} k={13} /></Field>
            <Row $top={6}>
              <CheckLabel $off><Check type="checkbox" disabled />Motivo</CheckLabel>
            </Row>
          </Settings>
        </Box>
      </Body>
      <Floating $x={171} $y={249} $w={171} $h={82}>
        <FloatTitle $h={35}><DocLogo /><Title>Senza tit...</Title><Controls doc /></FloatTitle>
        <DocBody><DocImage $h={22} /></DocBody>
      </Floating>
      <StepNumber $x={40} $y={519}>3</StepNumber>
      <Callout $x={857} $y={266}>1</Callout>
      <Callout $x={863} $y={317}>2</Callout>
      <Callout $x={356} $y={321}>3</Callout>
      <Overlay aria-hidden>
        <Arrow x1={848} y1={337} x2={323} y2={307} />
        <Arrow x1={874} y1={284} x2={975} y2={221} />
        <Arrow x1={882} y1={337} x2={937} y2={337} />
      </Overlay>
    </Window>
  </ThemeProvider>
);

const alignPaths = {
  l: 'M0 1.500h12M0 4.500h8M0 7.500h12M0 10.500h8',
  c: 'M0 1.500h12M2 4.500h8M0 7.500h12M2 10.500h8',
  r: 'M0 1.500h12M4 4.500h8M0 7.500h12M4 10.500h8',
};

const AlignIcon = ({ side }: { side: 'l' | 'c' | 'r' }) => (
  <svg width="13" height="13" viewBox="0 0 12 12" stroke="#555" strokeWidth="2.400" aria-hidden>
    <path d={alignPaths[side]} />
  </svg>
);

const StepFour = () => (
  <ThemeProvider theme={compact}>
    <Window $margin="1px 0 6px 1px">
      <TitleBar $idle><Logo /><Title $idle>PhotoFiltre</Title><Controls idle /></TitleBar>
      <Menu />
      <MainBar />
      <EffectBar />
      <Body>
        <SideRail count={compact.railCount} />
        <Workspace />
        <Box front="#de5a5a" back="#ff8080" spectrum selected="pointer" />
      </Body>
      <Floating $x={97} $y={175} $w={163} $h={72} $idle>
        <FloatTitle $h={30} $idle><DocLogo /><Title $idle>Senza tit...</Title><Controls doc idle /></FloatTitle>
        <DocBody><DocImage $h={20} /></DocBody>
      </Floating>
      <Floating $x={317} $y={134} $w={529} $h={462}>
        <FloatTitle $h={30}>
          <ThemeProvider theme={{ ...compact, titleFont: narrow, titleSize: 14 }}><Title>Testo</Title></ThemeProvider>
          <CaptionButton $close aria-label="Chiudi"><Glyph kind="close" /></CaptionButton>
        </FloatTitle>
        <DialogBody $pad="8px 8px 0 6px">
          <TabRow role="tablist">
            <Tab $on role="tab" aria-selected>Testo</Tab>
            <Tab role="tab" aria-selected={false}>Effetti</Tab>
          </TabRow>
          <TabPanel>
            <FormGrid $cols="231px 82px 74px 1fr">
              <Field><Line $h={17}>Carattere :</Line><Choice value="Handwriting" w={209} h={21} k={16} mark /></Field>
              <Field><Line $h={17}>Dimensione :</Line><Spinner value="11" w={60} h={21} k={13} /></Field>
              <Column $gap={4} $top={5}>
                <CheckLabel><Check type="checkbox" defaultChecked />Grassetto</CheckLabel>
                <CheckLabel><Check type="checkbox" />Corsivo</CheckLabel>
              </Column>
              <Column $gap={4} $top={5}>
                <CheckLabel><Check type="checkbox" />Barrato</CheckLabel>
                <CheckLabel><Check type="checkbox" />Sottolineato</CheckLabel>
              </Column>
            </FormGrid>
            <PanelRule />
            <FormGrid $cols="97px 89px 90px 82px 1fr">
              <Field as="div">
                <Line $h={17}>Colore :</Line>
                <SelectShell $w={74} $h={21} $key={14}>
                  <ColorChip aria-label="Colore" />
                  <SelectKey><Chevron size={7} /></SelectKey>
                </SelectShell>
              </Field>
              <Field as="div">
                <Line $h={17}>Allineamento :</Line>
                <Row $gap={3}>
                  <AlignButton $on aria-label="Sinistra"><AlignIcon side="l" /></AlignButton>
                  <AlignButton aria-label="Centro"><AlignIcon side="c" /></AlignButton>
                  <AlignButton aria-label="Destra"><AlignIcon side="r" /></AlignButton>
                </Row>
              </Field>
              <Field><Line $h={17}>Angolo :</Line><Spinner value="0" w={60} h={21} k={13} /></Field>
              <Row $top={18}><CheckLabel><Check type="checkbox" defaultChecked />Antialias</CheckLabel></Row>
              <Row $top={9}><PushButton $w={111} $h={24} $main>Cancella testo</PushButton></Row>
            </FormGrid>
            <PanelRule />
            <FormGrid $cols="298px 7px 1fr">
              <Field>
                <Line $h={17}>Testo :</Line>
                <TextShell>
                  <TextArea defaultValue="BUONGIOOORNO!" spellCheck={false} />
                  <ScrollBar>
                    <ScrollKey><Chevron turn={180} color="#c4c2b6" /></ScrollKey>
                    <ScrollKey><Chevron color="#c4c2b6" /></ScrollKey>
                  </ScrollBar>
                  <ScrollBar $row>
                    <ScrollKey><Chevron turn={90} color="#c4c2b6" /></ScrollKey>
                    <ScrollKey><Chevron turn={-90} color="#c4c2b6" /></ScrollKey>
                  </ScrollBar>
                </TextShell>
              </Field>
              <span />
              <Field as="div"><Line $h={17}>Anteprima :</Line><Preview>Abyz</Preview></Field>
            </FormGrid>
          </TabPanel>
          <Row $top={11} $gap={7}>
            <PushButton $w={163} $h={24}>Trasformare in selezione</PushButton>
            <Spacer />
            <PushButton $w={68} $h={24} $main>Ok</PushButton>
            <PushButton $w={68} $h={24}>Annulla</PushButton>
          </Row>
        </DialogBody>
      </Floating>
      <StepNumber $x={40} $y={519}>4</StepNumber>
      <Overlay aria-hidden>
        <Arrow x1={335} y1={121} x2={361} y2={70} />
        <Arrow x1={438} y1={182} x2={403} y2={183} />
        <Arrow x1={306} y1={243} x2={344} y2={243} />
        <Arrow x1={558} y1={240} x2={579} y2={240} />
        <Arrow x1={643} y1={224} x2={659} y2={223} />
        <Arrow x1={302} y1={306} x2={346} y2={307} />
      </Overlay>
    </Window>
  </ThemeProvider>
);

export default function App() {
  return (
    <>
      <GlobalStyle />
      <SharedDefs />
      <Page>
        <StepOne />
        <StepTwo />
        <StepThree />
        <StepFour />
      </Page>
    </>
  );
}
